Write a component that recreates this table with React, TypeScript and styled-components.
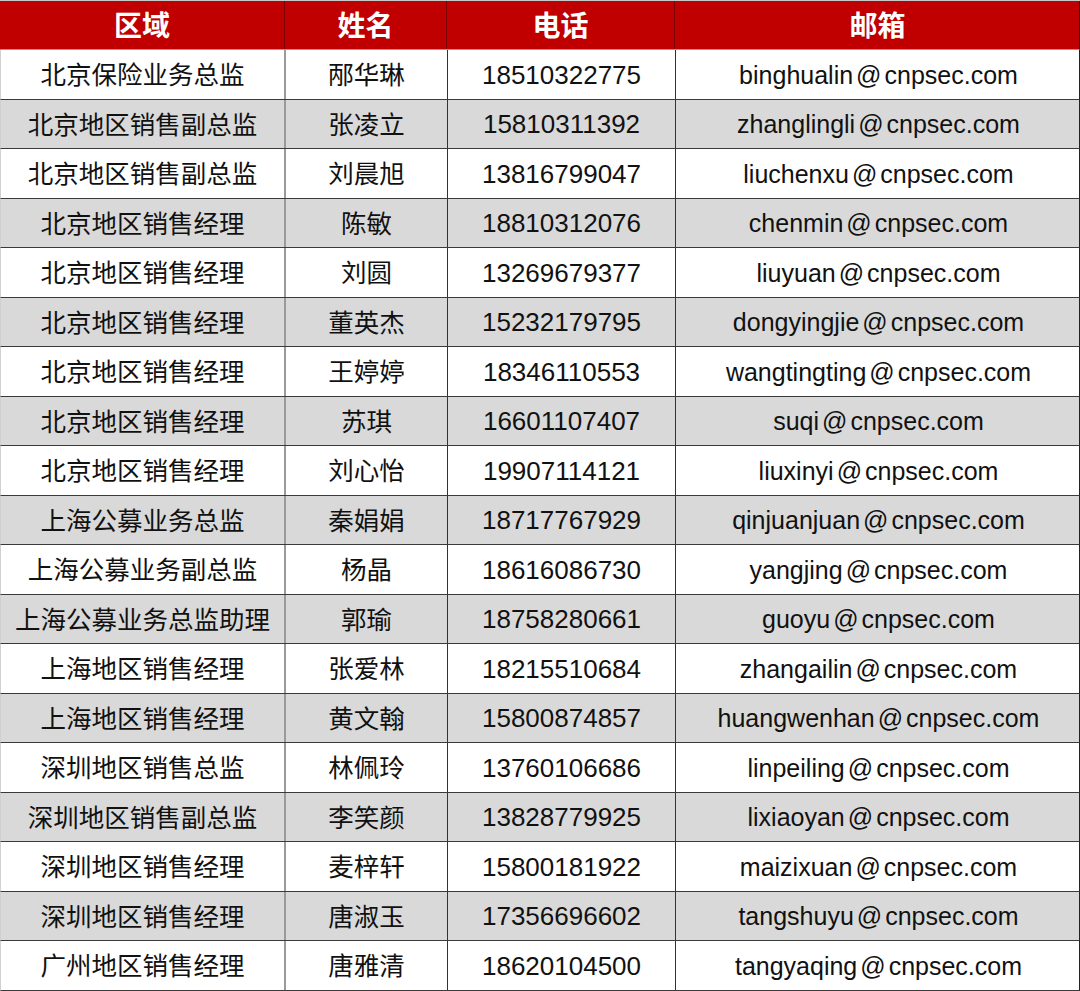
import React from 'react';
import styled, { createGlobalStyle } from 'styled-components';

const GlobalStyle = createGlobalStyle`
  html, body {
    margin: 0;
    padding: 0;
    background: #ffffff;
  }
  body {
    font-family: 'Liberation Sans', Arial, 'Noto Sans CJK SC', sans-serif;
  }
`;

const Sheet = styled.div`
  width: 1080px;
  border-top: 1px solid #c8c8c8;
  box-sizing: border-box;
`;

const Row = styled.div<{ $shade?: boolean }>`
  display: grid;
  grid-template-columns: 285px 162px 228px 405px;
  height: 49.5px;
  box-sizing: border-box;
  border-bottom: 1px solid #3a3a3a;
  border-left: 1px solid #d0d0d0;
  border-right: 1px solid #222;
  background-color: ${p => (p.$shade ? '#d9d9d9' : '#ffffff')};
`;

const HeadRow = styled(Row)`
  height: 49px;
  background-color: #c00000;
  border-left: none;
  border-bottom: 1px solid #9a9a9a;
`;

const Cell = styled.div<{ $line?: 'grey' | 'dark' | 'none' }>`
  display: flex;
  align-items: center;
  justify-content: center;
  color: #111;
  font-size: 24px;
  white-space: nowrap;
  box-sizing: border-box;
  border-right: ${p =>
    p.$line === 'grey' ? '2px solid #9a9a9a' : p.$line === 'dark' ? '1px solid #333' : 'none'};
`;

const HeadCell = styled(Cell)`
  color: #ffffff;
  font-size: 28px;
  font-weight: bold;
  font-family: 'Noto Sans CJK SC', sans-serif;
  border-right-color: #7a0000;
  padding-bottom: 2px;
`;

const CnText = styled.span`
  font-family: 'Noto Sans CJK SC', sans-serif;
  font-size: 25.5px;
  padding-bottom: 3px;
`;

const Phone = styled.span`
  font-size: 26px;
  padding-top: 2px;
`;

const Email = styled.span`
  font-size: 25px;
  padding-top: 2px;
`;

// the @ in the source sheet sits with a little air on both sides
const At = styled.span`
  margin: 0 3px;
`;

const people = [
  ['北京保险业务总监', '邴华琳', '18510322775', 'binghualin'],
  ['北京地区销售副总监', '张凌立', '15810311392', 'zhanglingli'],
  ['北京地区销售副总监', '刘晨旭', '13816799047', 'liuchenxu'],
  ['北京地区销售经理', '陈敏', '18810312076', 'chenmin'],
  ['北京地区销售经理', '刘圆', '13269679377', 'liuyuan'],
  ['北京地区销售经理', '董英杰', '15232179795', 'dongyingjie'],
  ['北京地区销售经理', '王婷婷', '18346110553', 'wangtingting'],
  ['北京地区销售经理', '苏琪', '16601107407', 'suqi'],
  ['北京地区销售经理', '刘心怡', '19907114121', 'liuxinyi'],
  ['上海公募业务总监', '秦娟娟', '18717767929', 'qinjuanjuan'],
  ['上海公募业务副总监', '杨晶', '18616086730', 'yangjing'],
  ['上海公募业务总监助理', '郭瑜', '18758280661', 'guoyu'],
  ['上海地区销售经理', '张爱林', '18215510684', 'zhangailin'],
  ['上海地区销售经理', '黄文翰', '15800874857', 'huangwenhan'],
  ['深圳地区销售总监', '林佩玲', '13760106686', 'linpeiling'],
  ['深圳地区销售副总监', '李笑颜', '13828779925', 'lixiaoyan'],
  ['深圳地区销售经理', '麦梓轩', '15800181922', 'maizixuan'],
  ['深圳地区销售经理', '唐淑玉', '17356696602', 'tangshuyu'],
  ['广州地区销售经理', '唐雅清', '18620104500', 'tangyaqing'],
];

const App: React.FC = () => {
  return (
    <>
      <GlobalStyle />
      <Sheet>
        <HeadRow>
          <HeadCell $line="dark">区域</HeadCell>
          <HeadCell $line="dark">姓名</HeadCell>
          <HeadCell $line="dark">电话</HeadCell>
          <HeadCell>邮箱</HeadCell>
        </HeadRow>
        {people.map((p, i) => (
          <Row key={p[2]} $shade={i % 2 === 1}>
            <Cell $line="grey"><CnText>{p[0]}</CnText></Cell>
            <Cell $line="dark"><CnText>{p[1]}</CnText></Cell>
            <Cell $line="dark"><Phone>{p[2]}</Phone></Cell>
            <Cell>
              <Email>
                {p[3]}<At>@</At>cnpsec.com
              </Email>
            </Cell>
          </Row>
        ))}
      </Sheet>
    </>
  );
};

export default App;
